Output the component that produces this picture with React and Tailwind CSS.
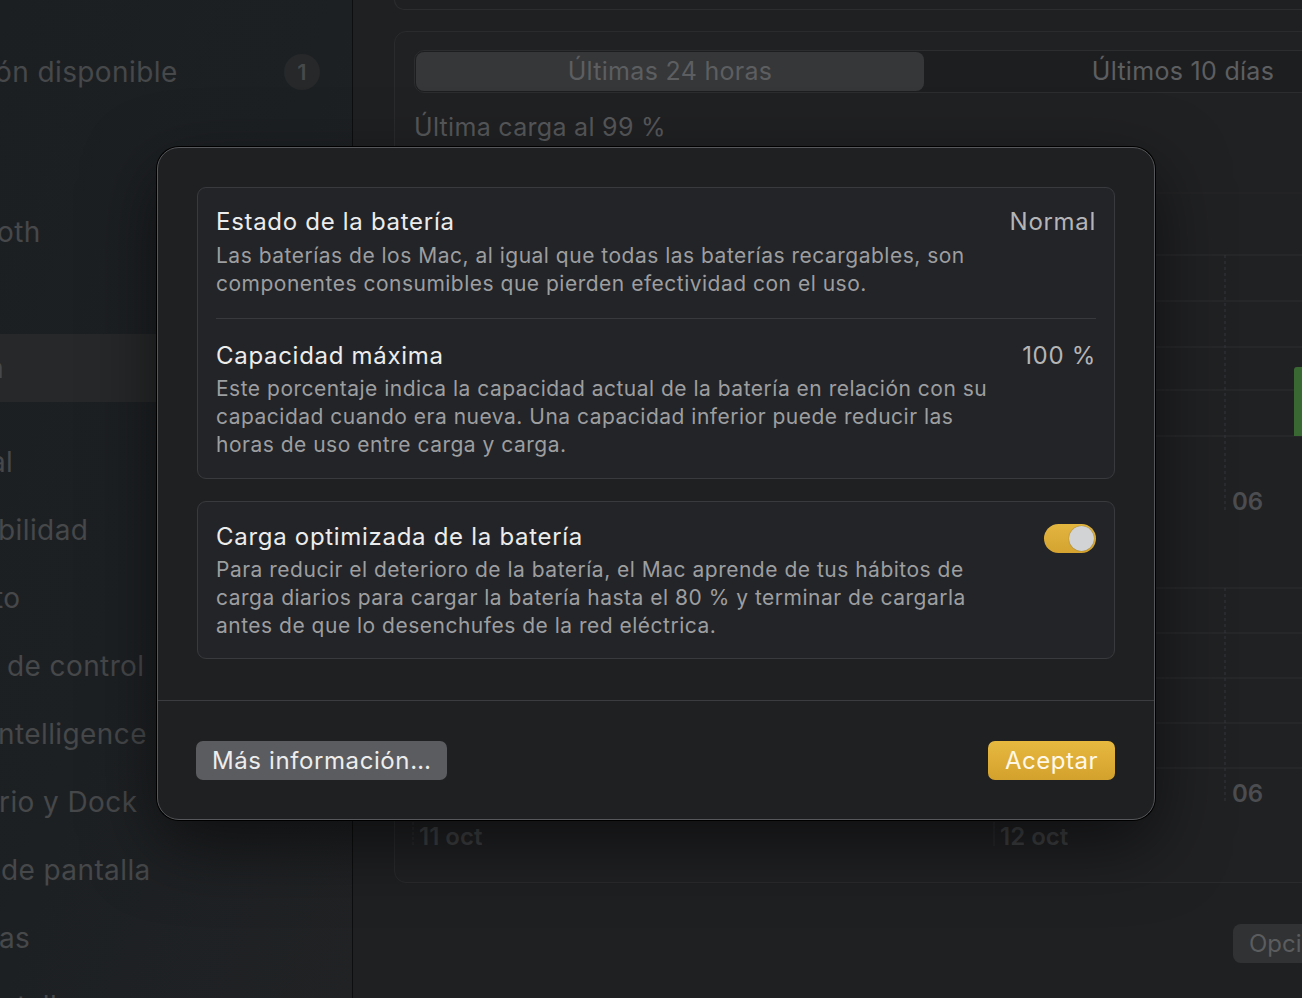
import React from 'react';

const sidebarTop = [{ t: 'ón disponible', ml: '-5px', badge: true }];
const sidebarNet = [
  { t: '', ml: '0px' },
  { t: 'oth', ml: '-3px' },
  { t: '', ml: '0px' },
  { t: 'a', ml: '-12px', selected: true },
];
const sidebarMain = [
  { t: 'al', ml: '-10px' },
  { t: 'bilidad', ml: '-2px' },
  { t: 'to', ml: '-6px' },
  { t: 'de control', ml: '7px' },
  { t: 'ntelligence', ml: '-2px' },
  { t: 'rio y Dock', ml: '-1px' },
  { t: 'de pantalla', ml: '1px' },
  { t: 'as', ml: '-1px' },
  { t: 'ntallas', ml: '0px' },
];

function SideItem({ it }) {
  return (
    <div className={'h-[68px] flex items-center justify-between pr-[32px] ' + (it.selected ? 'bg-[#262829]' : '')}>
      <span style={{ marginLeft: it.ml }} className="text-[28px] tracking-[0.4px] text-[#46484a] whitespace-nowrap">{it.t}</span>
      {it.badge && (
        <span className="w-[36px] h-[36px] rounded-full bg-[#26282a] flex items-center justify-center text-[22px] font-semibold text-[#47494b]">1</span>
      )}
    </div>
  );
}

function Chart() {
  const top = [113, 159, 205, 248, 294];
  const bottom = [446, 491, 536, 581, 626];
  return (
    <svg width="1000" height="740" className="block">
      <line x1="19" y1="51" x2="1000" y2="51" stroke="#262729" strokeWidth="1" />
      {top.map(y => <line key={y} x1="19" y1={y} x2="1000" y2={y} stroke="#2d2e30" strokeWidth="1" />)}
      {bottom.map(y => <line key={y} x1="19" y1={y} x2="1000" y2={y} stroke="#2d2e30" strokeWidth="1" />)}
      <line x1="830" y1="113" x2="830" y2="370" stroke="#35363a" strokeWidth="1" strokeDasharray="3 3" />
      <line x1="830" y1="446" x2="830" y2="662" stroke="#35363a" strokeWidth="1" strokeDasharray="3 3" />
      <rect x="899" y="225" width="12" height="69" rx="3" fill="#3a6833" />
      <rect x="899" y="232" width="12" height="62" fill="#3a6833" />
      <text x="837" y="368" fill="#4c4d50" fontSize="24" fontWeight="600" fontFamily="Inter, sans-serif">06</text>
      <text x="837" y="660" fill="#4c4d50" fontSize="24" fontWeight="600" fontFamily="Inter, sans-serif">06</text>
      <line x1="18" y1="680" x2="18" y2="704" stroke="#2f3032" strokeWidth="1" strokeDasharray="3 2" />
      <line x1="599" y1="680" x2="599" y2="704" stroke="#2f3032" strokeWidth="1" />
      <text x="24" y="703" fill="#3f4042" fontSize="24" fontWeight="600" fontFamily="Inter, sans-serif">11 oct</text>
      <text x="605" y="703" fill="#3f4042" fontSize="24" fontWeight="600" fontFamily="Inter, sans-serif">12 oct</text>
    </svg>
  );
}

export default function App() {
  return (
    <div className="relative w-[1302px] h-[998px] overflow-hidden flex bg-[#1f2022]" style={{ fontFamily: 'Inter, "Noto Sans", sans-serif' }}>
      {/* sidebar */}
      <div className="w-[353px] shrink-0 h-full border-r border-[#0d0e0f] bg-gradient-to-br from-[#1c1f22] via-[#1d2023] to-[#202224] overflow-hidden">
        <div className="pt-[38px]">
          {sidebarTop.map((it, i) => <SideItem key={i} it={it} />)}
        </div>
        <div className="mt-[24px]">
          {sidebarNet.map((it, i) => <SideItem key={i} it={it} />)}
        </div>
        <div className="mt-[26px]">
          {sidebarMain.map((it, i) => <SideItem key={i} it={it} />)}
        </div>
      </div>

      {/* main */}
      <div className="flex-1 min-w-0 overflow-hidden">
        <div className="ml-[41px] w-[1000px] h-[10px] rounded-b-[12px] border-x border-b border-[#2c2d2f]" />
        <div className="ml-[41px] mt-[21px] w-[1000px] h-[852px] rounded-[12px] border border-[#2a2b2d] bg-[#202123] overflow-hidden">
          <div className="pl-[19px] pt-[18px]">
            <div className="w-[1040px] h-[43px] rounded-[10px] border border-[#2c2d2f] bg-[#1d1e20] flex items-center p-[1px]">
              <div className="shrink-0 w-[508px] h-[39px] rounded-[8px] bg-[#363739] flex items-center justify-center text-[25px] tracking-[0.3px] text-[#5d5e60]">Últimas 24 horas</div>
              <div className="shrink-0 w-[518px] h-[39px] flex items-center justify-center text-[25px] tracking-[0.3px] text-[#5d5e60]">Últimos 10 días</div>
            </div>
            <div className="mt-[19px] text-[25px] leading-[30px] tracking-[0.3px] text-[#57585a]">Última carga al 99 %</div>
          </div>
          <Chart />
        </div>
        <div className="mt-[41px] pl-[880px]">
          <div className="h-[39px] w-[200px] rounded-[8px] bg-[#313234] flex items-center px-[16px] text-[24px] text-[#5b5c5e] whitespace-nowrap">Opciones…</div>
        </div>
      </div>

      {/* sheet dialog */}
      <div className="absolute left-[157px] top-[147px] w-[998px] rounded-[22px] bg-[#1f2022] border border-[#56575a] shadow-[0_0_0_1px_#000,0_24px_70px_rgba(0,0,0,0.55)]">
        <div className="px-[39px] pt-[39px] flex flex-col gap-[22px]">
          <div className="rounded-[9px] border border-[#393a3d] bg-[#232427] px-[18px]">
            <div className="pt-[19px] pb-[20px] flex justify-between">
              <div>
                <div className="text-[24px] leading-[30px] tracking-[0.7px] text-[#ececec]">Estado de la batería</div>
                <div className="mt-[5px] text-[21px] leading-[28px] tracking-[0.5px] text-[#9d9ea0] whitespace-nowrap">
                  Las baterías de los Mac, al igual que todas las baterías recargables, son<br />
                  componentes consumibles que pierden efectividad con el uso.
                </div>
              </div>
              <div className="text-[24px] leading-[30px] tracking-[0.7px] text-[#b4b5b7]">Normal</div>
            </div>
            <div className="border-t border-[#38393c] pt-[22px] pb-[19px] flex justify-between">
              <div>
                <div className="text-[24px] leading-[30px] tracking-[0.7px] text-[#ececec]">Capacidad máxima</div>
                <div className="mt-[4px] text-[21px] leading-[28px] tracking-[0.5px] text-[#9d9ea0] whitespace-nowrap">
                  Este porcentaje indica la capacidad actual de la batería en relación con su<br />
                  capacidad cuando era nueva. Una capacidad inferior puede reducir las<br />
                  horas de uso entre carga y carga.
                </div>
              </div>
              <div className="text-[24px] leading-[30px] tracking-[0.7px] text-[#b4b5b7]">100 %</div>
            </div>
          </div>

          <div className="rounded-[9px] border border-[#393a3d] bg-[#232427] px-[18px] pt-[20px] pb-[18px] flex justify-between">
            <div>
              <div className="text-[24px] leading-[30px] tracking-[0.7px] text-[#ececec]">Carga optimizada de la batería</div>
              <div className="mt-[4px] text-[21px] leading-[28px] tracking-[0.5px] text-[#9d9ea0] whitespace-nowrap">
                Para reducir el deterioro de la batería, el Mac aprende de tus hábitos de<br />
                carga diarios para cargar la batería hasta el 80 % y terminar de cargarla<br />
                antes de que lo desenchufes de la red eléctrica.
              </div>
            </div>
            <div className="mt-[2px] w-[52px] h-[29px] rounded-full bg-gradient-to-b from-[#e3b640] to-[#d4a330] flex items-center justify-end pr-[2px]">
              <div className="w-[25px] h-[25px] rounded-full bg-[#d2d3d4] shadow-[0_0_1px_rgba(0,0,0,0.5)]" />
            </div>
          </div>
        </div>

        <div className="mt-[41px] border-t border-[#3b3c3f]" />

        <div className="px-[38px] pt-[40px] pb-[39px] flex justify-between">
          <button className="h-[39px] w-[251px] rounded-[7px] bg-[#5b5c5f] text-left px-[16px] text-[24px] tracking-[0.6px] text-[#ededed] whitespace-nowrap">Más información…</button>
          <button className="h-[39px] w-[127px] mr-[1px] rounded-[7px] bg-gradient-to-b from-[#e7b93f] to-[#d3a12d] text-[24px] tracking-[0.5px] text-[#fff8e8]">Aceptar</button>
        </div>
      </div>
    </div>
  );
}
